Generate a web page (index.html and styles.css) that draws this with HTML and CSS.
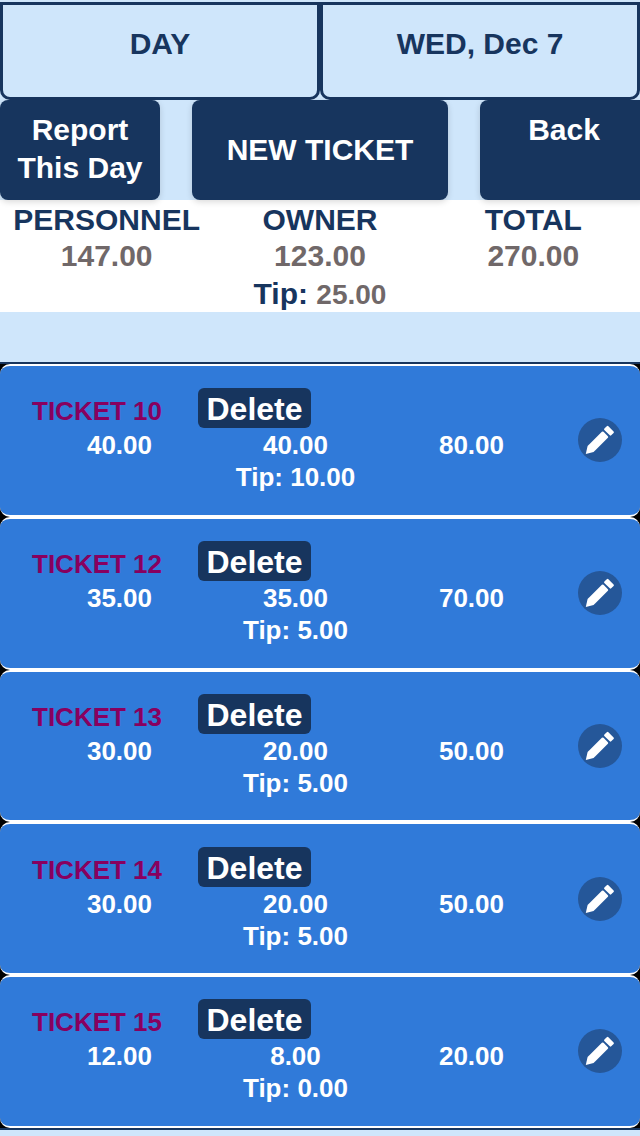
FILE: index.html
```html
<!DOCTYPE html>
<html lang="en">
<head>
<meta charset="utf-8">
<title>Day tickets</title>
<link rel="stylesheet" href="styles.css">
</head>
<body>
<svg width="0" height="0" class="defs">
  <symbol id="pencil" viewBox="0 0 44 44">
    <circle cx="22" cy="22" r="22" fill="#255799"/>
    <path d="M7.8 36 9.6 28 23.9 13.8Q24.7 13.1 25.5 13.8L29.9 18.2Q30.6 19 29.9 19.7L15.6 34Z" fill="#fff"/>
    <path d="M26.3 12Q25.7 11.3 26.4 10.6L28.8 8.2Q29.6 7.5 30.4 8.2L35.6 13.4Q36.3 14.2 35.6 14.9L33.2 17.3Q32.5 18 31.8 17.3Z" fill="#fff"/>
  </symbol>
</svg>
<header class="head">
  <div class="head-cell">DAY</div>
  <div class="head-cell">WED, Dec 7</div>
</header>
<nav class="actions">
  <div class="btn report">Report<br>This Day</div>
  <div class="btn new">NEW TICKET</div>
  <div class="btn back">Back</div>
</nav>
<section class="summary">
  <div class="label">PERSONNEL</div><div class="label">OWNER</div><div class="label">TOTAL</div>
  <div class="sum">147.00</div><div class="sum">123.00</div><div class="sum">270.00</div>
  <div class="sum-tip">Tip: <span>25.00</span></div>
</section>
<main class="tickets">
  <article class="ticket">
    <div class="body">
      <div class="top"><span class="name">TICKET 10</span><span class="delete">Delete</span></div>
      <div class="values"><span>40.00</span><span>40.00</span><span>80.00</span></div>
      <div class="tip">Tip: 10.00</div>
    </div>
    <svg class="edit"><use href="#pencil"/></svg>
  </article>
  <article class="ticket">
    <div class="body">
      <div class="top"><span class="name">TICKET 12</span><span class="delete">Delete</span></div>
      <div class="values"><span>35.00</span><span>35.00</span><span>70.00</span></div>
      <div class="tip">Tip: 5.00</div>
    </div>
    <svg class="edit"><use href="#pencil"/></svg>
  </article>
  <article class="ticket short">
    <div class="body">
      <div class="top"><span class="name">TICKET 13</span><span class="delete">Delete</span></div>
      <div class="values"><span>30.00</span><span>20.00</span><span>50.00</span></div>
      <div class="tip">Tip: 5.00</div>
    </div>
    <svg class="edit"><use href="#pencil"/></svg>
  </article>
  <article class="ticket lowered">
    <div class="body">
      <div class="top"><span class="name">TICKET 14</span><span class="delete">Delete</span></div>
      <div class="values"><span>30.00</span><span>20.00</span><span>50.00</span></div>
      <div class="tip">Tip: 5.00</div>
    </div>
    <svg class="edit"><use href="#pencil"/></svg>
  </article>
  <article class="ticket">
    <div class="body">
      <div class="top"><span class="name">TICKET 15</span><span class="delete">Delete</span></div>
      <div class="values"><span>12.00</span><span>8.00</span><span>20.00</span></div>
      <div class="tip">Tip: 0.00</div>
    </div>
    <svg class="edit"><use href="#pencil"/></svg>
  </article>
</main>
</body>
</html>
```
FILE: styles.css
```css
* { box-sizing: border-box; }
body {
  margin: 0;
  height: 1136px;
  overflow: hidden;
  background: #cfe6fb;
  color: #17355e;
  font: bold 30px/38px "Liberation Sans", Arial, sans-serif;
  display: flex;
  flex-direction: column;
}
.defs { display: none; }
.head { display: flex; padding-top: 2px; height: 100px; flex: none; }
.head-cell {
  flex: 1;
  border: 3px solid #17355e;
  border-radius: 0 0 10px 10px;
  padding-top: 20px;
  text-align: center;
}
.actions { display: flex; gap: 32px; height: 100px; flex: none; position: relative; }
.btn {
  flex: none;
  padding-top: 11px;
  border-radius: 8px;
  background: #17355e;
  color: #fff;
  text-align: center;
  box-shadow: 0 2px 6px rgba(0, 0, 0, .15);
}
.report { width: 160px; }
.new { width: 256px; padding-top: 31px; }
.back { width: 168px; }
.summary {
  flex: none;
  display: grid;
  grid-template-columns: repeat(3, 1fr);
  grid-template-rows: 36px 36px 40px;
  height: 112px;
  padding-top: 2px;
  overflow: hidden;
  background: #fff;
  text-align: center;
  line-height: 36px;
}
.sum, .sum-tip span { color: #706869; }
.sum-tip { grid-column: 1 / -1; line-height: 40px; }
.sum-tip span { font-size: 28px; }
.tickets {
  flex: none;
  margin-top: 50px;
  border: solid #17355e;
  border-width: 2px 0;
  background: #000;
}
.ticket {
  display: flex;
  height: 153px;
  padding: 22px 18px 0 32px;
  border: solid #fff;
  border-width: 2px 0;
  border-radius: 10px;
  background: #307ad9;
  color: #fff;
  font-size: 26px;
  line-height: 32px;
}
.short { height: 152px; }
.lowered { padding-top: 23px; }
.body { width: 528px; margin-right: 18px; }
.top { display: flex; height: 41px; }
.name { width: 166px; padding-top: 7px; color: #88005f; }
.delete {
  width: 113px;
  height: 40px;
  padding-top: 1px;
  border-radius: 6px;
  background: #17355e;
  font-size: 32px;
  line-height: 40px;
  text-align: center;
}
.values { display: grid; grid-template-columns: repeat(3, 176px); margin-left: -0.5px; text-align: center; }
.tip { margin-right: 1px; text-align: center; }
.edit { flex: none; width: 44px; height: 44px; margin-top: 30px; }
```
